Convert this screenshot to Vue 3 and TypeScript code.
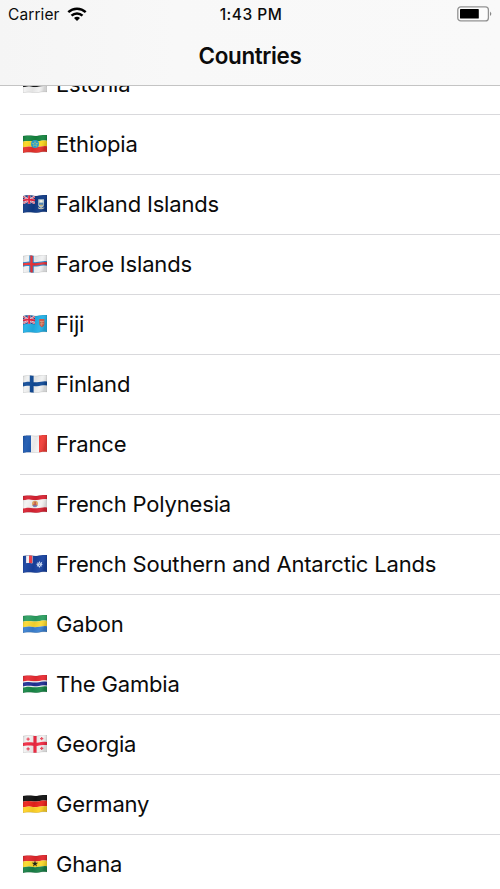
<script setup lang="ts">
interface Shape {
  d: string
  fill: string
}
interface Country {
  name: string
  shapes: Shape[]
}

const W = 24
const H = 16.8

// Vertical displacement of the cloth at a horizontal position.
const wave = (x: number): number => 0.95 - 0.03 * x - 0.4 * Math.sin((2 * Math.PI * (x - 1)) / 16)

// A rectangle of cloth that follows the wave.
function band(fill: string, y0: number, y1: number, x0 = 0, x1 = W): Shape {
  const steps = 12
  const xs = Array.from({ length: steps + 1 }, (_, i) => x0 + ((x1 - x0) * i) / steps)
  const top = xs.map((x) => `${x.toFixed(2)} ${(y0 + wave(x)).toFixed(2)}`)
  const bottom = [...xs].reverse().map((x) => `${x.toFixed(2)} ${(y1 + wave(x)).toFixed(2)}`)
  return { d: `M${top.join('L')}L${bottom.join('L')}Z`, fill }
}

function disc(fill: string, cx: number, cy: number, rx: number, ry = rx): Shape {
  return { d: `M${cx - rx} ${cy}a${rx} ${ry} 0 1 0 ${2 * rx} 0a${rx} ${ry} 0 1 0 ${-2 * rx} 0Z`, fill }
}

const path = (fill: string, d: string): Shape => ({ d, fill })

function stripes(...colors: string[]): Shape[] {
  const h = H / colors.length
  return colors.map((c, i) => band(c, i * h, (i + 1) * h))
}

function unionJack(blue: string): Shape[] {
  return [
    band(blue, 0, 8.4, 0, 12),
    path('#efc9d2', 'M0 1.2L1.6 1L12 7.6V9L10.2 8.8L0 2.5ZM12 1.2L10.4 1L0 7.6V9L1.8 8.8L12 2.6Z'),
    path('#e02440', 'M0 1.2L12 8.5V9L0 2.1ZM12 1.2L0 8.4V9L12 2.1Z'),
    band('#f5dbe1', 3, 5.6, 0, 12),
    band('#f5dbe1', 0, 8.4, 4.8, 7.4),
    band('#e11f3c', 3.4, 5.2, 0, 12),
    band('#e11f3c', 0, 8.4, 5.2, 7),
  ]
}

const star = 'M12 5.4L12.8 7.7L15.2 7.7L13.3 9.2L14 11.6L12 10.1L10 11.6L10.7 9.2L8.8 7.7L11.2 7.7Z'

const countries: Country[] = [
  { name: 'Estonia', shapes: stripes('#2878c0', '#151617', '#f1f1f1') },
  {
    name: 'Ethiopia',
    shapes: [
      ...stripes('#14853f', '#fad71f', '#e5302b'),
      disc('#2ba0d0', 12, 9.1, 4),
      path('#cfd86a', 'M12 5.8L12.8 8L15.1 8.1L13.3 9.5L13.9 11.8L12 10.5L10.1 11.8L10.7 9.5L8.9 8.1L11.2 8Z'),
      disc('#43b2c8', 12, 9.1, 1.6),
    ],
  },
  {
    name: 'Falkland Islands',
    shapes: [
      band('#0f3a86', 0, H),
      ...unionJack('#1d3b88'),
      path('#b9cdd0', 'M15.2 4.3H21V9.8C20.8 11.6 19.7 12.6 18.1 13.1C16.4 12.5 15.4 11.4 15.2 9.7Z'),
      path('#4c82b3', 'M15.9 7.8H20.3V10H15.9Z'),
      disc('#f1eee4', 18.1, 6.2, 1.6, 1.1),
      path('#c8ad73', 'M16.2 9.8H20L19.2 11.3H17Z'),
      path('#d5d2b5', 'M15 12.2Q18 14.2 21.3 12.2V13.3Q18 15 15 13.3Z'),
    ],
  },
  {
    name: 'Faroe Islands',
    shapes: [
      band('#f0f1f2', 0, H),
      band('#2489d0', 6.2, 10.6),
      band('#2489d0', 0, H, 6.3, 10.7),
      band('#ec3236', 7.2, 9.6),
      band('#ec3236', 0, H, 7.3, 9.7),
    ],
  },
  {
    name: 'Fiji',
    shapes: [
      band('#22b0e6', 0, H),
      ...unionJack('#2a4a92'),
      path('#d2503f', 'M16.3 4H21.4V9C21.2 10.8 20.2 11.7 18.8 12.2C17.2 11.4 16.4 10.5 16.3 9Z'),
      path('#dda184', 'M16.9 6.2H20.8V6.9H16.9ZM18.5 6.5H19.2V11H18.5ZM17 8.6H20.8V9.2H17Z'),
      disc('#5f8a63', 17.7, 7.8, 0.6),
      disc('#7e6a52', 20, 10, 0.6),
    ],
  },
  {
    name: 'Finland',
    shapes: [band('#f0f1f1', 0, H), band('#104b98', 6.4, 10.3), band('#104b98', 0, H, 6.8, 10.6)],
  },
  {
    name: 'France',
    shapes: [
      band('#1c58b0', 0, H, 0, 8),
      band('#f6f6f6', 0, H, 8, 16),
      band('#f23c36', 0, H, 16, 24),
    ],
  },
  {
    name: 'French Polynesia',
    shapes: [
      band('#d92232', 0, 4.4),
      band('#f3f3f2', 4.2, 12.5),
      band('#d92232', 12.4, H),
      disc('#e6ab62', 12, 8.8, 3),
      path('#6b8fd0', 'M9.4 10H14.6Q14 12.2 12 12.2Q10 12.2 9.4 10Z'),
      path('#cb5b50', 'M11.4 6.8H12.9V9.4H14L13.3 10.4H10.5L10 9.3H11.4Z'),
    ],
  },
  {
    name: 'French Southern and Antarctic Lands',
    shapes: [
      band('#1741a0', 0, H),
      band('#f2f0f2', 0, 7.6, 3.1, 9.6),
      band('#f03a44', 0, 7.6, 6, 9.2),
      path('#c9d8f2', 'M16.2 5.8L17.2 8L19.2 6.8L18.7 8.8L19.8 9.8L18.4 10.3L18.7 11.8L17.4 11.2L16.3 13L15.4 11.2L13.8 11.6L14.3 10L12.9 9L14.7 8.5L14.3 7L15.7 7.9Z'),
      path('#4765b4', 'M15.7 8.6H17.4V9.2H15.7ZM16 9.9H17.1V10.9H16Z'),
    ],
  },
  { name: 'Gabon', shapes: stripes('#2a9f60', '#fbd931', '#3a80d0') },
  {
    name: 'The Gambia',
    shapes: [
      band('#ea2a32', 0, 5.6),
      band('#f4f4f4', 5.4, 11.5),
      band('#1f2f94', 6.6, 10.3),
      band('#178746', 11.4, H),
    ],
  },
  {
    name: 'Georgia',
    shapes: [
      band('#f2f2f2', 0, H),
      band('#f02a42', 6.8, 10),
      band('#f02a42', 0, H, 10.4, 13.6),
      ...[
        [5.1, 4.2],
        [18.7, 3.7],
        [5.1, 13.8],
        [18.7, 13.4],
      ].map(([x, y]) => path('#ea4456', `M${x - 0.6} ${y - 1.6}h1.2v1h1v1.2h-1v1h-1.2v-1h-1v-1.2h1Z`)),
    ],
  },
  { name: 'Germany', shapes: stripes('#111111', '#ea211b', '#ffd226') },
  {
    name: 'Ghana',
    shapes: [...stripes('#e2262c', '#fbd929', '#188046'), path('#20231d', star)],
  },
]

const outline = band('none', 0, H).d
</script>

<template>
  <main class="screen">
    <header class="header">
      <div class="status">
        <div class="carrier">
          <span>Carrier</span>
          <svg class="wifi" width="20" height="14" viewBox="0 0 20 14">
            <g fill="none" stroke="#000" stroke-width="2.5">
              <path d="M1.3 5.2C6.2 .6 13.8 .6 18.7 5.2" />
              <path d="M4.5 8.6C7.6 5.7 12.4 5.7 15.5 8.6" />
            </g>
            <path d="M7 10.9C8.7 9.4 11.3 9.4 13 10.9L10 13.9Z" />
          </svg>
        </div>
        <time class="clock">1:43 PM</time>
        <svg class="battery" width="36" height="16" viewBox="0 0 36 16">
          <rect x=".8" y=".8" width="30.6" height="14.1" rx="3" fill="#fcfcfc" stroke="#929292" stroke-width="1.3" />
          <rect x="3" y="3" width="18.8" height="9.6" rx=".7" />
          <path d="M33.3 5.5Q35.2 7.8 33.3 10.1Z" fill="#555" />
        </svg>
      </div>
      <h1 class="title">Countries</h1>
    </header>
    <ul class="list">
      <li v-for="country in countries" :key="country.name" class="row">
        <svg class="flag" width="24" height="18" viewBox="0 0 24 18">
          <defs>
            <linearGradient id="cloth" x1="0" x2="1" y1="0" y2="0.2">
              <stop offset="0" stop-color="#000" stop-opacity=".1" />
              <stop offset=".22" stop-color="#fff" stop-opacity=".06" />
              <stop offset=".55" stop-color="#000" stop-opacity=".06" />
              <stop offset=".8" stop-color="#fff" stop-opacity=".05" />
              <stop offset="1" stop-color="#000" stop-opacity=".13" />
            </linearGradient>
          </defs>
          <path v-for="(shape, i) in country.shapes" :key="i" :d="shape.d" :fill="shape.fill" />
          <path :d="outline" fill="url(#cloth)" stroke="#000" stroke-opacity=".16" stroke-width=".6" />
        </svg>
        <span class="name">{{ country.name }}</span>
      </li>
    </ul>
  </main>
</template>

<style>
body {
  margin: 0;
  background: #fff;
}
</style>

<style scoped>
.screen {
  display: flex;
  flex-direction: column;
  height: 889px;
  overflow: hidden;
  background: #fff;
  color: #0b0b0b;
  font-family: Inter, 'Liberation Sans', sans-serif;
}

.header {
  position: relative;
  flex: none;
  box-sizing: border-box;
  height: 86px;
  border-bottom: 1px solid #c4c4c4;
  background: linear-gradient(90deg, #f5f5f5, #f8f8f8 35%, #f9f9f9);
}

.status {
  display: grid;
  grid-template-columns: 1fr auto 1fr;
  align-items: center;
  height: 28px;
  padding: 0 7px 0 8px;
  font-size: 15.5px;
}

.carrier {
  display: flex;
  align-items: center;
  gap: 7px;
  letter-spacing: 0.1px;
}

.clock {
  padding-left: 1px;
  font-weight: 500;
  letter-spacing: 0.5px;
}

.battery {
  justify-self: end;
}

.title {
  margin: 0;
  font-size: 22.4px;
  font-weight: 600;
  letter-spacing: -0.35px;
  line-height: 56px;
  text-align: center;
}

.list {
  flex: none;
  margin: -31px 0 0;
  padding: 0 0 0 20px;
  list-style: none;
}

.row {
  display: flex;
  align-items: center;
  gap: 9px;
  box-sizing: border-box;
  height: 60px;
  padding: 0 0 2px 3px;
  border-bottom: 1px solid #d9d9dc;
}

.flag {
  flex: none;
}

.name {
  font-size: 22px;
  letter-spacing: -0.18px;
  line-height: 30px;
  white-space: nowrap;
}
</style>
